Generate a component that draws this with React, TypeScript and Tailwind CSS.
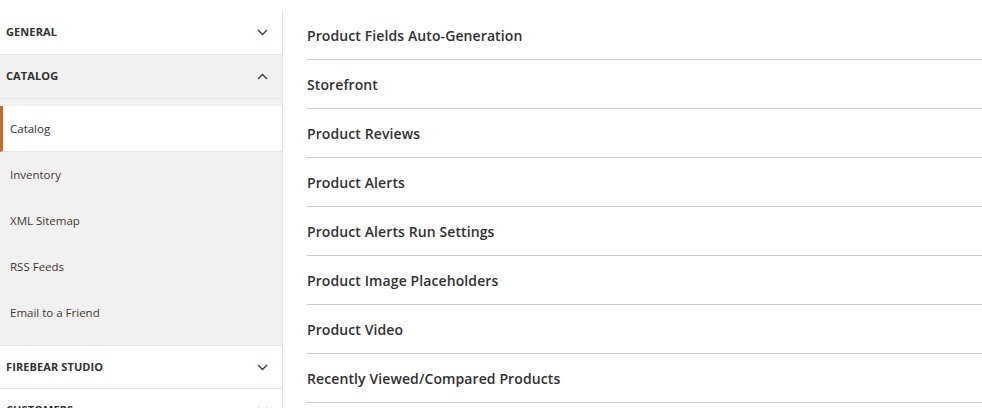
import React from "react";

const Chevron = ({ up }: { up?: boolean }) => (
  <svg width="11" height="7" viewBox="0 0 11 7" className="shrink-0">
    <path
      d={up ? "M1 6 L5.5 1.5 L10 6" : "M1 1 L5.5 5.5 L10 1"}
      fill="none"
      stroke="#41362f"
      strokeWidth="1.3"
    />
  </svg>
);

const Section = ({ title, up, gray, h }: { title: string; up?: boolean; gray?: boolean; h: string }) => (
  <div
    className={`flex ${h} items-center justify-between border-b border-[#e3e3e3] pl-[6px] pr-[14px] ${
      gray ? "bg-[#f1f1f1]" : "bg-white"
    }`}
  >
    <span className="text-[11px] font-bold uppercase tracking-[0.1px] text-[#303030]">{title}</span>
    <Chevron up={up} />
  </div>
);

const subItems = ["Inventory", "XML Sitemap", "RSS Feeds", "Email to a Friend"];

const rows = [
  "Product Fields Auto-Generation",
  "Storefront",
  "Product Reviews",
  "Product Alerts",
  "Product Alerts Run Settings",
  "Product Image Placeholders",
  "Product Video",
  "Recently Viewed/Compared Products",
];

export default function App() {
  return (
    <div
      className="flex h-[408px] w-[982px] overflow-hidden bg-white pt-[10px]"
      style={{ fontFamily: '"Open Sans", "Noto Sans", sans-serif' }}
    >
      <div className="w-[283px] shrink-0 border-r border-[#e3e3e3]">
        <Section title="General" h="h-[45px]" />
        <Section title="Catalog" up gray h="h-[44px]" />
        <div className="bg-[#f1f1f1] pb-[9px] pt-[7px] border-b border-[#e3e3e3]">
          <div className="flex h-[46px] items-center border-b border-[#e3e3e3] border-l-[3px] border-l-[#cf6527] bg-white pl-[7px] text-[11.5px] text-[#303030]">
            Catalog
          </div>
          {subItems.map((s) => (
            <div key={s} className="flex h-[46px] items-center pl-[10px] text-[11.5px] text-[#41362f]">
              {s}
            </div>
          ))}
        </div>
        <Section title="Firebear Studio" h="h-[43px]" />
        <Section title="Customers" h="h-[44px]" />
      </div>
      <div className="flex-1 pl-[24px] pt-[1px]">
        {rows.map((r) => (
          <div
            key={r}
            className="flex h-[49px] items-center border-b border-[#cccccc] text-[14px] font-semibold tracking-[0.1px] text-[#303030]"
          >
            {r}
          </div>
        ))}
      </div>
    </div>
  );
}
